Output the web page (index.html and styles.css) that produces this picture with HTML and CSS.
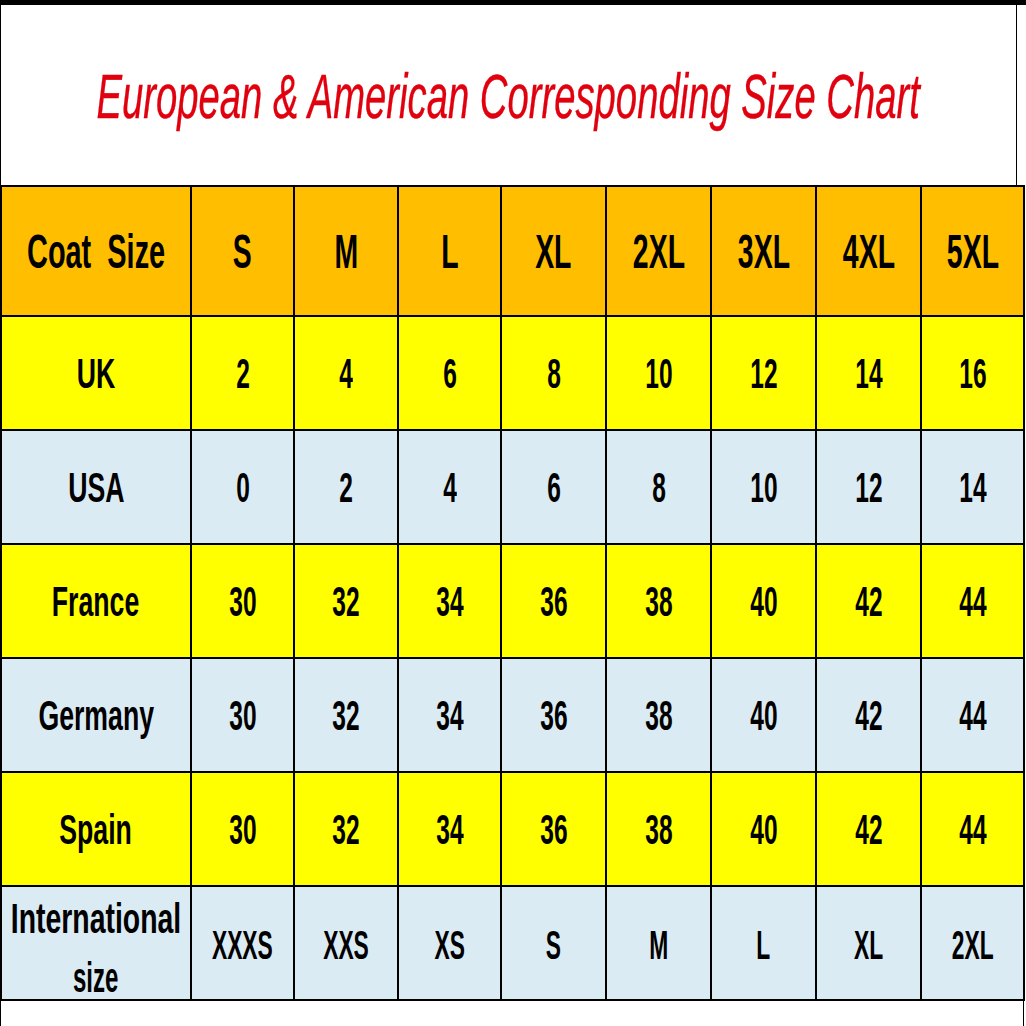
FILE: index.html
```html
<!DOCTYPE html>
<html lang="en">
<head>
<meta charset="utf-8">
<title>Size Chart</title>
<link rel="stylesheet" href="styles.css">
</head>
<body>
<div class="page">
  <div class="title-box">
    <h1 class="title"><span class="sq-title">European &amp; American Corresponding Size Chart</span></h1>
  </div>
  <div class="chart">
    <div class="cell head"><span class="sq-head-label">Coat&nbsp;&nbsp;Size</span></div>
    <div class="cell head"><span class="sq-head">S</span></div>
    <div class="cell head"><span class="sq-head">M</span></div>
    <div class="cell head"><span class="sq-head">L</span></div>
    <div class="cell head"><span class="sq-head">XL</span></div>
    <div class="cell head"><span class="sq-head">2XL</span></div>
    <div class="cell head"><span class="sq-head">3XL</span></div>
    <div class="cell head"><span class="sq-head">4XL</span></div>
    <div class="cell head"><span class="sq-head">5XL</span></div>

    <div class="cell yellow"><span class="sq-label">UK</span></div>
    <div class="cell yellow"><span class="sq-num">2</span></div>
    <div class="cell yellow"><span class="sq-num">4</span></div>
    <div class="cell yellow"><span class="sq-num">6</span></div>
    <div class="cell yellow"><span class="sq-num">8</span></div>
    <div class="cell yellow"><span class="sq-num">10</span></div>
    <div class="cell yellow"><span class="sq-num">12</span></div>
    <div class="cell yellow"><span class="sq-num">14</span></div>
    <div class="cell yellow"><span class="sq-num">16</span></div>

    <div class="cell blue"><span class="sq-label">USA</span></div>
    <div class="cell blue"><span class="sq-num">0</span></div>
    <div class="cell blue"><span class="sq-num">2</span></div>
    <div class="cell blue"><span class="sq-num">4</span></div>
    <div class="cell blue"><span class="sq-num">6</span></div>
    <div class="cell blue"><span class="sq-num">8</span></div>
    <div class="cell blue"><span class="sq-num">10</span></div>
    <div class="cell blue"><span class="sq-num">12</span></div>
    <div class="cell blue"><span class="sq-num">14</span></div>

    <div class="cell yellow"><span class="sq-label">France</span></div>
    <div class="cell yellow"><span class="sq-num">30</span></div>
    <div class="cell yellow"><span class="sq-num">32</span></div>
    <div class="cell yellow"><span class="sq-num">34</span></div>
    <div class="cell yellow"><span class="sq-num">36</span></div>
    <div class="cell yellow"><span class="sq-num">38</span></div>
    <div class="cell yellow"><span class="sq-num">40</span></div>
    <div class="cell yellow"><span class="sq-num">42</span></div>
    <div class="cell yellow"><span class="sq-num">44</span></div>

    <div class="cell blue"><span class="sq-label">Germany</span></div>
    <div class="cell blue"><span class="sq-num">30</span></div>
    <div class="cell blue"><span class="sq-num">32</span></div>
    <div class="cell blue"><span class="sq-num">34</span></div>
    <div class="cell blue"><span class="sq-num">36</span></div>
    <div class="cell blue"><span class="sq-num">38</span></div>
    <div class="cell blue"><span class="sq-num">40</span></div>
    <div class="cell blue"><span class="sq-num">42</span></div>
    <div class="cell blue"><span class="sq-num">44</span></div>

    <div class="cell yellow"><span class="sq-label">Spain</span></div>
    <div class="cell yellow"><span class="sq-num">30</span></div>
    <div class="cell yellow"><span class="sq-num">32</span></div>
    <div class="cell yellow"><span class="sq-num">34</span></div>
    <div class="cell yellow"><span class="sq-num">36</span></div>
    <div class="cell yellow"><span class="sq-num">38</span></div>
    <div class="cell yellow"><span class="sq-num">40</span></div>
    <div class="cell yellow"><span class="sq-num">42</span></div>
    <div class="cell yellow"><span class="sq-num">44</span></div>

    <div class="cell blue intl"><span class="sq-intl1">International</span><span class="sq-intl2">size</span></div>
    <div class="cell blue"><span class="sq-int">XXXS</span></div>
    <div class="cell blue"><span class="sq-int">XXS</span></div>
    <div class="cell blue"><span class="sq-int">XS</span></div>
    <div class="cell blue"><span class="sq-int">S</span></div>
    <div class="cell blue"><span class="sq-int">M</span></div>
    <div class="cell blue"><span class="sq-int">L</span></div>
    <div class="cell blue"><span class="sq-int">XL</span></div>
    <div class="cell blue"><span class="sq-int">2XL</span></div>
  </div>
  <div class="footer"></div>
</div>
</body>
</html>
```

FILE: styles.css
```css
html, body {
  margin: 0;
  padding: 0;
  background: #ffffff;
}

.page {
  width: 1026px;
  height: 1026px;
  overflow: hidden;
  border-top: 5px solid #000;
  box-sizing: border-box;
  display: flex;
  flex-direction: column;
  font-family: "Liberation Sans", Arial, sans-serif;
}

.title-box {
  height: 180px;
  width: 1017px;
  box-sizing: border-box;
  border-left: 1px solid #000;
  border-right: 1px solid #000;
  display: flex;
  align-items: center;
  justify-content: center;
  padding-top: 3px;
}

.title {
  margin: 0;
  font-size: 63px;
  line-height: 63px;
  font-weight: normal;
  font-style: italic;
  color: #e0000e;
  white-space: nowrap;
  display: flex;
  justify-content: center;
  width: 100%;
}

.sq-title {
  display: inline-block;
  transform: scaleX(0.607);
  -webkit-text-stroke: 0.4px #e0000e;
}

.chart {
  display: grid;
  grid-template-columns: 188px 101px 102px 101px 103px 103px 103px 103px 1fr;
  grid-template-rows: 128px repeat(6, 112px);
  gap: 2px;
  padding: 2px;
  width: 1025px;
  box-sizing: border-box;
  background: #000;
  color: #000;
  font-weight: bold;
}

.cell {
  display: flex;
  flex-direction: column;
  align-items: center;
  justify-content: center;
  white-space: nowrap;
  min-width: 0;
}

.head { background: #ffbf00; }
.yellow { background: #ffff00; }
.blue { background: #dbebf3; }

.cell span {
  display: inline-block;
  transform-origin: center center;
}

.sq-head-label {
  font-size: 49px;
  line-height: 49px;
  transform: scaleX(0.59);
}

.sq-head {
  font-size: 49px;
  line-height: 49px;
  transform: scaleX(0.58);
}

.sq-label {
  font-size: 43px;
  line-height: 43px;
  transform: scaleX(0.62);
}

.sq-num {
  font-size: 43px;
  line-height: 43px;
  transform: scaleX(0.57);
}

.sq-int {
  font-size: 40px;
  line-height: 40px;
  transform: scaleX(0.57);
  margin-top: 4px;
}

.intl {
  padding-top: 10px;
  box-sizing: border-box;
}

.sq-intl1 {
  font-size: 43px;
  line-height: 59px;
  transform: scaleX(0.66);
}

.sq-intl2 {
  font-size: 43px;
  line-height: 59px;
  transform: scaleX(0.56);
}

.footer {
  flex: 1;
  width: 1024px;
  box-sizing: border-box;
  border-left: 1px solid #000;
  border-right: 1px solid #000;
}
```
